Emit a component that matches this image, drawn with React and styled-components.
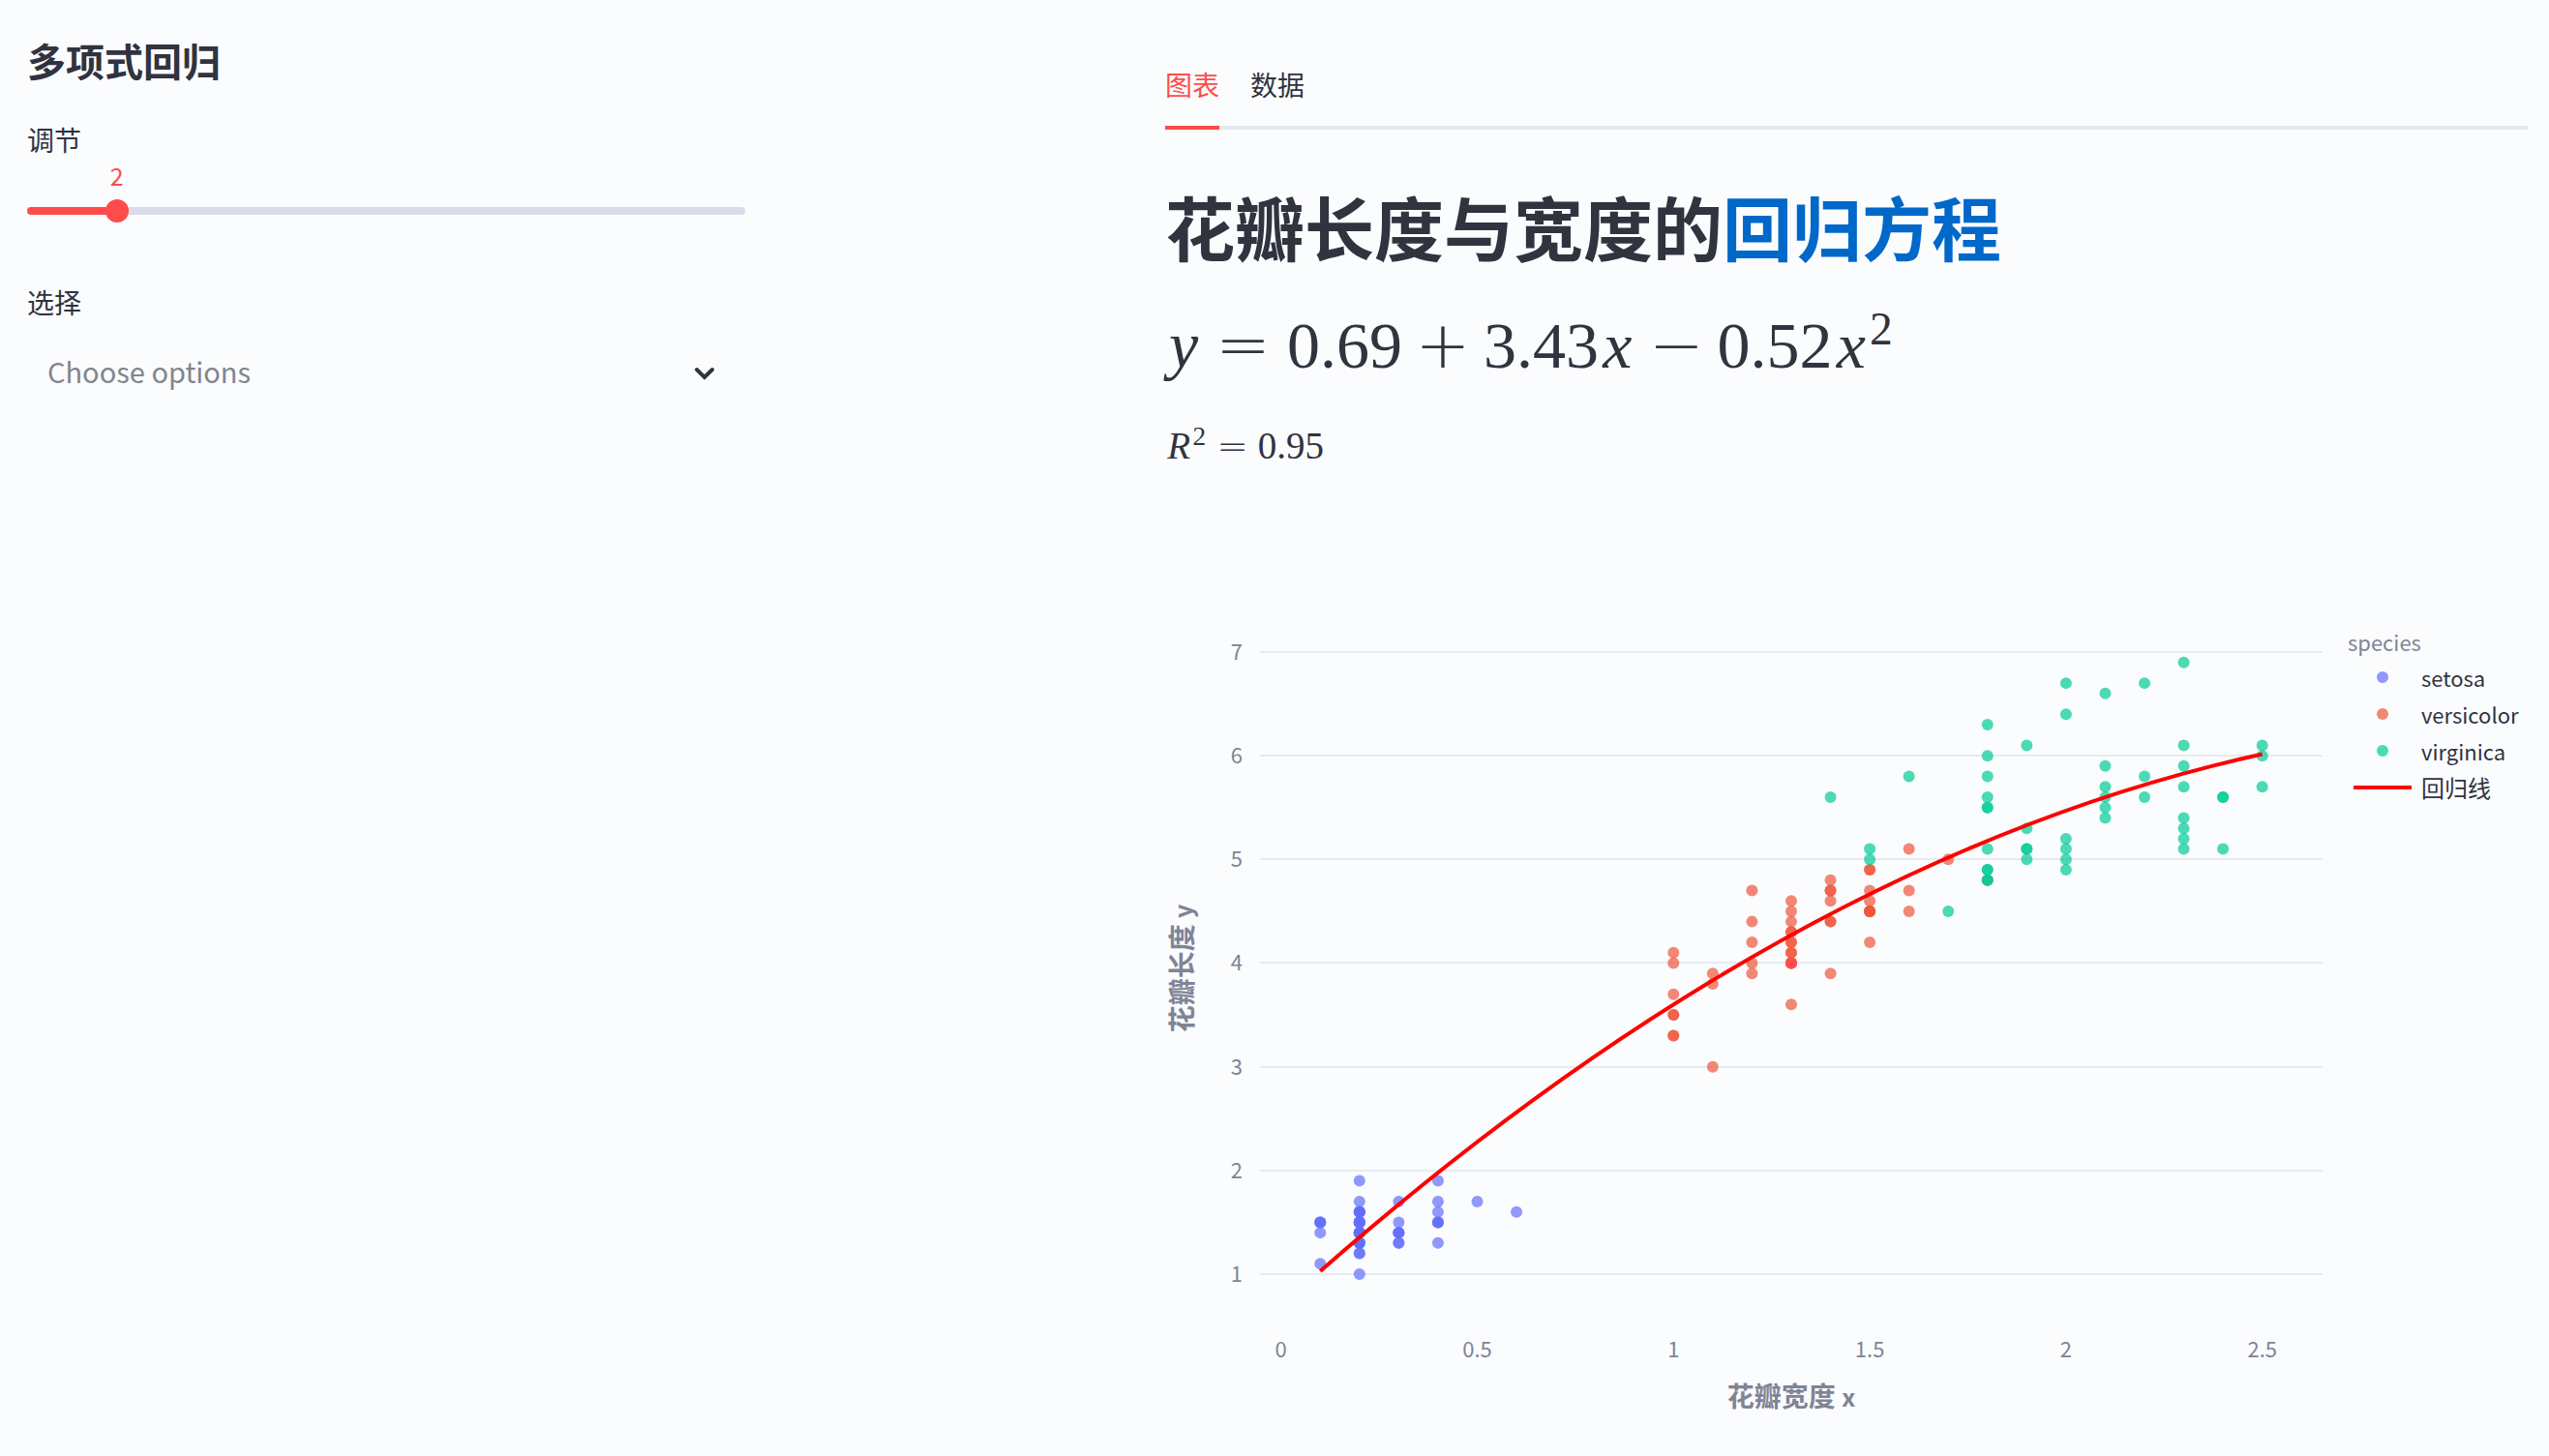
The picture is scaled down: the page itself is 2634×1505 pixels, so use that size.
import React, { useState } from "react";
import styled, { createGlobalStyle } from "styled-components";

const INK = "#31333f";
const MUTED = "#808495";
const ACCENT = "#ff4b4b";

const GlobalStyle = createGlobalStyle`
  * { box-sizing: border-box; }
  body {
    margin: 0;
    background: #fafcfe;
    color: ${INK};
    font-family: "Noto Sans CJK SC", "Noto Sans", sans-serif;
    font-size: 28px;
  }
`;

const Page = styled.main`
  display: grid;
  grid-template-columns: 742fr 370fr 1408fr;
  column-gap: 32px;
  padding: 0 22px 0 28px;
`;

const Controls = styled.section`
  display: flex;
  flex-direction: column;
  padding-top: 38px;
`;

const PanelTitle = styled.h2`
  margin: 0 0 36px;
  font-size: 40px;
  line-height: 48px;
  font-weight: 700;
`;

const FieldLabel = styled.label`
  font-size: 28px;
  line-height: 44px;
`;

const SliderField = styled.div`
  display: flex;
  flex-direction: column;
  margin-bottom: 60px;
`;

const ValueRow = styled.div`
  position: relative;
  height: 40px;
`;

const SliderValue = styled.output`
  position: absolute;
  top: 0;
  transform: translateX(-50%);
  color: ${ACCENT};
  font-size: 25px;
  line-height: 30px;
`;

const Rail = styled.div`
  display: flex;
  align-items: center;
  height: 24px;
`;

const RailTrack = styled.div`
  display: flex;
  align-items: center;
  flex: 1;
  height: 8px;
  border-radius: 4px;
`;

const RangeInput = styled.input`
  appearance: none;
  flex: 1;
  height: 24px;
  margin: 0 -12px;
  background: transparent;
  cursor: pointer;
  &::-webkit-slider-thumb {
    appearance: none;
    width: 24px;
    height: 24px;
    border-radius: 50%;
    background: ${ACCENT};
  }
  &::-moz-range-thumb {
    width: 24px;
    height: 24px;
    border: 0;
    border-radius: 50%;
    background: ${ACCENT};
  }
`;

const SelectField = styled.div`
  display: flex;
  flex-direction: column;
`;

const SelectBox = styled.div`
  display: grid;
  align-items: center;
  margin-top: 12px;
  > * { grid-area: 1 / 1; }
`;

const Select = styled.select`
  appearance: none;
  width: 100%;
  height: 80px;
  padding: 0 72px 6px 21px;
  border: 0;
  background: transparent;
  color: #83858c;
  font-family: inherit;
  font-size: 29px;
`;

const Chevron = styled.svg`
  justify-self: end;
  margin-right: 26px;
  pointer-events: none;
`;

const Report = styled.section`
  grid-column: 3;
  min-width: 0;
  padding-top: 44px;
`;

const TabList = styled.div`
  display: flex;
  gap: 32px;
  box-shadow: inset 0 -4px 0 #e8e9eb;
`;

const Tab = styled.button`
  height: 90px;
  padding: 0;
  border: 0;
  border-bottom: 4px solid ${(p) => (p.$active ? ACCENT : "transparent")};
  background: none;
  color: ${(p) => (p.$active ? ACCENT : INK)};
  font-family: inherit;
  font-size: 28px;
  line-height: 44px;
  cursor: pointer;
`;

const Title = styled.h1`
  margin: 55px 0 0;
  font-size: 72px;
  line-height: 88px;
  font-weight: 700;
`;

const Highlight = styled.span`
  color: #0068c9;
`;

const Formula = styled.p`
  margin: 0;
  font-family: "Liberation Serif", serif;
  font-size: ${(p) => p.$size}px;
  line-height: ${(p) => p.$line}px;
  white-space: nowrap;
`;

const Variable = styled.i`
  margin: 0 0.06em;
`;

const Operator = styled.span`
  margin: 0 ${(p) => (p.$relation ? "0.25em" : "0.2em")} 0 0.2em;
  font-family: "DejaVu Sans", sans-serif;
  font-weight: 200;
`;

const Power = styled.sup`
  margin-right: 0.12em;
  font-size: 0.7em;
  line-height: 0;
  vertical-align: 0.5em;
`;

const Figure = styled.figure`
  display: flex;
  align-items: flex-start;
  margin: 120px 0 0;
`;

const Plot = styled.svg`
  flex: 1;
  min-width: 0;
  height: auto;
  overflow: visible;
  font-family: "Noto Sans CJK SC", "Noto Sans", sans-serif;
`;

const TickText = styled.text`
  fill: ${MUTED};
  font-size: 22px;
`;

const AxisTitle = styled.text`
  fill: ${MUTED};
  font-size: 28px;
  font-weight: 700;
  text-anchor: middle;
`;

const AxisLetter = styled.tspan`
  font-size: 25px;
`;

const Legend = styled.figcaption`
  flex: 0 0 186px;
  padding-top: 40px;
`;

const LegendTitle = styled.div`
  color: ${MUTED};
  font-size: 22px;
  line-height: 36px;
`;

const LegendList = styled.ul`
  margin: 0;
  padding: 0;
  list-style: none;
`;

const LegendItem = styled.li`
  display: flex;
  align-items: center;
  gap: 10px;
  padding-left: 6px;
  height: 38px;
  font-size: ${(p) => (p.$wide ? 24 : 22)}px;
  line-height: 38px;
`;

/* petal width -> petal lengths */
const SPECIES = [
  {
    name: "setosa",
    color: "#636efa",
    points: {
      0.1: [1.5, 1.4, 1.1, 1.5, 1.5],
      0.2: [1.4, 1.4, 1.3, 1.5, 1.4, 1.5, 1.4, 1.5, 1.6, 1.2, 1.7, 1, 1.9, 1.6, 1.5, 1.4, 1.6, 1.6, 1.4, 1.2, 1.3, 1.3, 1.5, 1.3, 1.6, 1.4, 1.5, 1.4],
      0.3: [1.4, 1.4, 1.7, 1.5, 1.3, 1.3, 1.4],
      0.4: [1.7, 1.5, 1.3, 1.5, 1.6, 1.5, 1.9],
      0.5: [1.7],
      0.6: [1.6],
    },
  },
  {
    name: "versicolor",
    color: "#ef553b",
    selected: [1.3, 4],
    points: {
      "1.0": [3.3, 3.5, 4, 3.5, 3.7, 3.3, 4.1],
      1.1: [3.9, 3.8, 3],
      1.2: [4.7, 3.9, 4.4, 4, 4.2],
      1.3: [4, 4.5, 4.6, 3.6, 4, 4.3, 4.4, 4.1, 4, 4.2, 4.2, 4.3, 4.1],
      1.4: [4.7, 3.9, 4.7, 4.4, 4.4, 4.8, 4.6],
      1.5: [4.5, 4.9, 4.6, 4.2, 4.5, 4.5, 4.9, 4.5, 4.7, 4.5],
      1.6: [4.7, 5.1, 4.5],
      1.7: [5],
      1.8: [4.8],
    },
  },
  {
    name: "virginica",
    color: "#00cc96",
    points: {
      1.4: [5.6],
      1.5: [5, 5.1],
      1.6: [5.8],
      1.7: [4.5],
      1.8: [5.6, 6.3, 5.8, 5.5, 4.9, 6, 4.8, 4.9, 5.5, 4.8, 5.1],
      1.9: [5.1, 5.3, 6.1, 5.1, 5],
      "2.0": [5.1, 5, 6.7, 4.9, 6.4, 5.2],
      2.1: [5.9, 6.6, 5.7, 5.6, 5.4, 5.5],
      2.2: [5.8, 6.7, 5.6],
      2.3: [5.3, 6.9, 5.7, 6.1, 5.1, 5.9, 5.2, 5.4],
      2.4: [5.1, 5.6, 5.6],
      2.5: [6, 6.1, 5.7],
    },
  },
];

const FIT_START = 0.1;
const FIT_END = 2.5;
const fit = (x) => 0.69 + 3.43 * x - 0.52 * x * x;
const sx = (v) => 119.7 + v * 405.6;
const sy = (v) => 712 - (v - 1) * 107.17;

/* quadratic arc between the two ends of the fitted range */
const curvePath = () => {
  const mid = (FIT_START + FIT_END) / 2;
  const control = fit(FIT_START) + (3.43 - 1.04 * FIT_START) * (mid - FIT_START);
  return `M${sx(FIT_START)} ${sy(fit(FIT_START))}Q${sx(mid)} ${sy(control)} ${sx(FIT_END)} ${sy(fit(FIT_END))}`;
};

function ScatterPlot() {
  return (
    <Plot viewBox="0 0 1222 880" role="img" aria-label="花瓣长度与宽度">
      {[1, 2, 3, 4, 5, 6, 7].map((v) => (
        <g key={v}>
          <line x1="98" x2="1196" y1={Math.round(sy(v))} y2={Math.round(sy(v))} stroke="#e6eaf1" strokeWidth="2" />
          <TickText x="80" y={Math.round(sy(v)) + 8} textAnchor="end">{v}</TickText>
        </g>
      ))}
      {[0, 0.5, 1, 1.5, 2, 2.5].map((v) => (
        <TickText key={v} x={sx(v)} y="798" textAnchor="middle">{v}</TickText>
      ))}
      {SPECIES.map((s) => (
        <g key={s.name} fill={s.color} fillOpacity="0.7">
          {Object.entries(s.points).flatMap(([x, ys]) =>
            ys.map((y, i) => <circle key={`${x}-${i}`} cx={sx(Number(x))} cy={sy(y)} r="6" />)
          )}
          {s.selected && (
            <circle cx={sx(s.selected[0])} cy={sy(s.selected[1])} r="6" fill={ACCENT} fillOpacity="0.9" />
          )}
        </g>
      ))}
      <path d={curvePath()} fill="none" stroke="#ff0000" strokeWidth="4" />
      <AxisTitle x="647" y="849">花瓣宽度 <AxisLetter>x</AxisLetter></AxisTitle>
      <AxisTitle transform="translate(28 396) rotate(-90)">花瓣长度 <AxisLetter>y</AxisLetter></AxisTitle>
    </Plot>
  );
}

function DegreeSlider() {
  const [value, setValue] = useState(2);
  const share = ((value - 1) / 8) * 100;
  return (
    <SliderField>
      <FieldLabel htmlFor="degree">调节</FieldLabel>
      <ValueRow>
        <SliderValue htmlFor="degree" style={{ left: `${share}%` }}>{value}</SliderValue>
      </ValueRow>
      <Rail>
        <RailTrack style={{ background: `linear-gradient(to right, ${ACCENT} ${share}%, #dadde9 ${share}%)` }}>
          <RangeInput id="degree" type="range" min="1" max="9" value={value} onChange={(e) => setValue(Number(e.target.value))} />
        </RailTrack>
      </Rail>
    </SliderField>
  );
}

export default function App() {
  const [tab, setTab] = useState("图表");
  return (
    <>
      <GlobalStyle />
      <Page>
        <Controls>
          <PanelTitle>多项式回归</PanelTitle>
          <DegreeSlider />
          <SelectField>
            <FieldLabel htmlFor="options">选择</FieldLabel>
            <SelectBox>
              <Select id="options" defaultValue="">
                <option value="">Choose options</option>
                {SPECIES.map((s) => <option key={s.name}>{s.name}</option>)}
              </Select>
              <Chevron width="32" height="32" viewBox="0 0 32 32" fill="none" stroke={INK} strokeWidth="4" strokeLinecap="round" strokeLinejoin="miter" aria-hidden="true">
                <path d="M8 12l8 8 8-8" />
              </Chevron>
            </SelectBox>
          </SelectField>
        </Controls>
        <Report>
          <TabList role="tablist">
            {["图表", "数据"].map((name) => (
              <Tab key={name} type="button" role="tab" aria-selected={tab === name} $active={tab === name} onClick={() => setTab(name)}>
                {name}
              </Tab>
            ))}
          </TabList>
          <Title>花瓣长度与宽度的<Highlight>回归方程</Highlight></Title>
          <Formula $size={68} $line={160}>
            <Variable>y</Variable><Operator $relation>=</Operator>0.69<Operator>+</Operator>3.43<Variable>x</Variable><Operator>−</Operator>0.52<Variable>x</Variable><Power>2</Power>
          </Formula>
          <Formula $size={39} $line={48}>
            <Variable>R</Variable><Power>2</Power><Operator $relation>=</Operator>0.95
          </Formula>
          <Figure>
            <ScatterPlot />
            <Legend>
              <LegendTitle>species</LegendTitle>
              <LegendList>
                {SPECIES.map((s) => (
                  <LegendItem key={s.name}>
                    <svg width="60" height="12" aria-hidden="true"><circle cx="30" cy="6" r="6" fill={s.color} fillOpacity="0.7" /></svg>
                    {s.name}
                  </LegendItem>
                ))}
                <LegendItem $wide>
                  <svg width="60" height="4" aria-hidden="true"><path d="M0 2h60" stroke="#ff0000" strokeWidth="4" /></svg>
                  回归线
                </LegendItem>
              </LegendList>
            </Legend>
          </Figure>
        </Report>
      </Page>
    </>
  );
}
